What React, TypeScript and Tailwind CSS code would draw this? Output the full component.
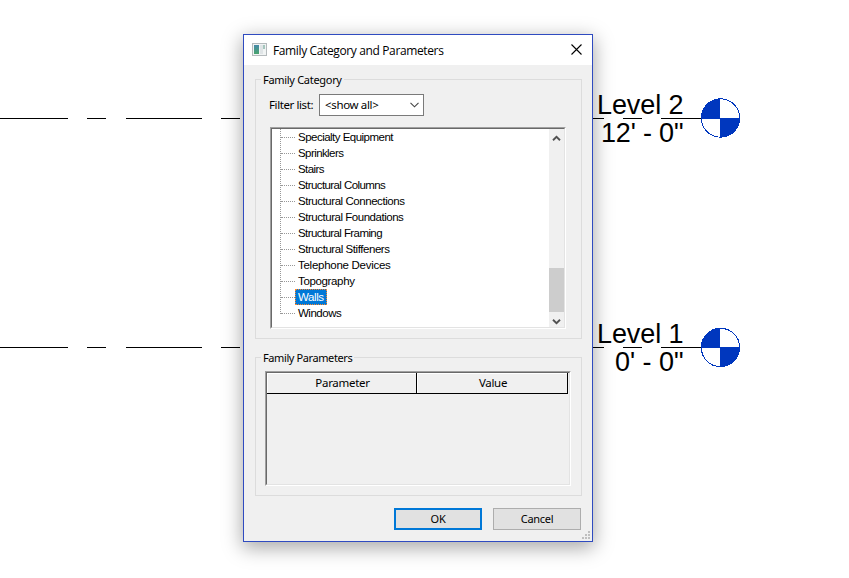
const categories = [
  { name: 'Specialty Equipment', spacing: 'tracking-[-0.52px]' },
  { name: 'Sprinklers', spacing: 'tracking-[-0.58px]' },
  { name: 'Stairs', spacing: 'tracking-[-0.6px]' },
  { name: 'Structural Columns', spacing: 'tracking-[-0.59px]' },
  { name: 'Structural Connections', spacing: 'tracking-[-0.45px]' },
  { name: 'Structural Foundations', spacing: 'tracking-[-0.47px]' },
  { name: 'Structural Framing', spacing: 'tracking-[-0.59px]' },
  { name: 'Structural Stiffeners', spacing: 'tracking-[-0.44px]' },
  { name: 'Telephone Devices', spacing: 'tracking-[-0.27px]' },
  { name: 'Topography', spacing: 'tracking-[-0.35px]' },
  { name: 'Walls', spacing: 'tracking-[-0.4px]' },
  { name: 'Windows', spacing: 'tracking-[-0.48px]' },
];

const dashes = [
  [0, 68],
  [87, 106],
  [126, 202],
  [221, 240],
  [593, 604],
  [623, 642],
  [661, 701],
];

function LevelMarker({ y, name, elevation, elevationX }: { y: number; name: string; elevation: string; elevationX: number }) {
  return (
    <g>
      {dashes.map(([a, b]) => (
        <rect key={a} x={a} y={y} width={b - a} height={1} fill="#000" shapeRendering="crispEdges" />
      ))}
      <text x={597} y={y - 4} textLength={86.5} fontSize={27} fontFamily="'Liberation Sans', Arial, sans-serif">
        {name}
      </text>
      <text x={elevationX} y={y + 24} textLength={683.5 - elevationX} fontSize={27} fontFamily="'Liberation Sans', Arial, sans-serif">
        {elevation}
      </text>
      <g transform={`translate(720.5 ${y + (y > 200 ? 0.5 : 0)})`} shapeRendering="crispEdges">
        <circle r={19.2} fill="#fff" stroke="#0037be" strokeWidth={1} />
        <path d="M-.5 .5H-19.5A19.5 19.5 0 0 1-.5-19.5ZM-.5 -.5H19.5A19.5 19.5 0 0 1-.5 19.5Z" fill="#0037be" />
      </g>
    </g>
  );
}

function ScrollArrow({ down = false }: { down?: boolean }) {
  return (
    <svg width="9" height="7" viewBox="0 0 9 7" className={down ? 'mt-1 rotate-180' : 'mt-0.5'}>
      <path d="M1 5.2 4.5 1.9 8 5.2" fill="none" stroke="#505050" strokeWidth="1.9" />
    </svg>
  );
}

function CategoryList() {
  return (
    <div className="ml-[14px] mt-[11px] h-[202px] w-[296px] border border-b-white border-l-[#a0a0a0] border-r-white border-t-[#a0a0a0]">
      <div className="flex h-full border border-b-[#e3e3e3] border-l-[#696969] border-r-[#e3e3e3] border-t-[#696969] bg-white">
        <div className="ml-2 h-[185px] border-l border-dotted border-[#989898]" />
        <ul className="flex-1">
          {categories.map((c) => (
            <li key={c.name} className="flex h-4">
              <div className="mt-2 h-px w-[14px] border-t border-dotted border-[#989898]" />
              <span
                className={
                  c.name === 'Walls'
                    ? "flex h-4 w-8 items-center bg-[#0078d7] pl-[3px] font-['Liberation_Sans',Arial,sans-serif] text-[11.5px] leading-4 text-white outline-1 -outline-offset-1 outline-dotted outline-[#ff8728] " + c.spacing
                    : "flex h-4 items-center whitespace-nowrap pl-[3px] font-['Liberation_Sans',Arial,sans-serif] text-[11.5px] leading-4 text-black " + c.spacing
                }
              >
                {c.name}
              </span>
            </li>
          ))}
        </ul>
        <div className="flex w-[15px] flex-col bg-[#f0f0f0]">
          <div className="flex h-[17px] items-center justify-center">
            <ScrollArrow />
          </div>
          <div className="mt-[122px] h-11 bg-[#cdcdcd]" />
          <div className="flex flex-1 items-center justify-center">
            <ScrollArrow down />
          </div>
        </div>
      </div>
    </div>
  );
}

function ParameterTable() {
  return (
    <div className="ml-[9px] mt-[5px] h-[115px] w-[306px] border border-b-white border-l-[#a0a0a0] border-r-white border-t-[#a0a0a0]">
      <div className="h-full border border-b-[#e3e3e3] border-l-[#696969] border-r-[#e3e3e3] border-t-[#696969]">
        <div className="flex h-[21px] w-[301px] border-b border-black text-center text-[11.5px] leading-[20px] tracking-[-0.3px]">
          <div className="w-[150px] border-r border-black pl-0.5 shadow-[inset_1px_1px_0_#fff]">Parameter</div>
          <div className="flex-1 border-r border-black pl-0.5 shadow-[inset_1px_1px_0_#fff]">Value</div>
        </div>
      </div>
    </div>
  );
}

function TitleBar() {
  return (
    <div className="flex h-[30px] items-center bg-white pl-2 pr-[10px]">
      <svg className="-mt-0.5" width="15" height="13" viewBox="0 0 15 13" shapeRendering="crispEdges">
        <defs>
          <linearGradient id="pane" x2="0" y2="1">
            <stop stopColor="#4689a8" />
            <stop offset="1" stopColor="#49a46d" />
          </linearGradient>
        </defs>
        <rect x=".5" y=".5" width="14" height="12" fill="#f1f4f4" stroke="#b4babc" />
        <rect x="2" y="2" width="5" height="9" fill="url(#pane)" />
        <rect x="8" y="2" width="3" height="9" fill="#dfe4e6" />
        <rect x="11" y="2" width="2" height="4" fill="#a5c6bd" />
      </svg>
      <h1 className="ml-1.5 flex-1 whitespace-nowrap pt-px font-['Open_Sans',sans-serif] text-[12px] tracking-[-0.37px]">Family Category and Parameters</h1>
      <svg className="-mt-0.5" width="11" height="11" viewBox="0 0 11 11">
        <path d="M.5 .5l10 10M10.5 .5l-10 10" stroke="#000" strokeWidth="1.1" />
      </svg>
    </div>
  );
}

function Dialog() {
  return (
    <section className="absolute left-[243px] top-[34px] flex h-[508px] w-[350px] flex-col border border-[#2f4bc0] bg-[#f0f0f0] font-['Noto_Sans',sans-serif] text-black shadow-[0_5px_18px_1px_rgba(0,0,0,0.34)]">
      <TitleBar />
      <fieldset className="ml-[11px] mt-[14px] h-[260px] w-[327px] border border-[#dcdcdc]">
        <div className="-mt-2 ml-[5px] h-[16px] w-fit whitespace-nowrap bg-[#f0f0f0] px-0.5 text-[11px] leading-[16px] tracking-[-0.3px]">Family Category</div>
        <div className="ml-[13px] mt-[6px] flex h-[22px] items-center">
          <label className="w-[50px] whitespace-nowrap text-[11.5px] tracking-[-0.4px]">Filter list:</label>
          <div className="flex h-[22px] w-[105px] items-center justify-between border border-[#7a7a7a] bg-white pl-[5px] pr-1 text-[11.5px] tracking-[-0.35px]">
            <span>&lt;show all&gt;</span>
            <svg width="9" height="6" viewBox="0 0 9 6">
              <path d="M.5 .8l4 4 4-4" fill="none" stroke="#444" strokeWidth="1.1" />
            </svg>
          </div>
        </div>
        <CategoryList />
      </fieldset>
      <fieldset className="ml-[11px] mt-[18px] h-[139px] w-[327px] border border-[#dcdcdc]">
        <div className="-mt-2 ml-[5px] h-[16px] w-fit whitespace-nowrap bg-[#f0f0f0] px-0.5 text-[11px] leading-[16px] tracking-[-0.4px]">Family Parameters</div>
        <ParameterTable />
      </fieldset>
      <div className="mt-3 flex gap-[11px] pl-[150px] text-[11px] tracking-[-0.3px]">
        <button className="h-[22px] w-[88px] border-2 border-[#0078d7] bg-[#e1e1e1] leading-[18px]">OK</button>
        <button className="h-[22px] w-[88px] border border-[#adadad] bg-[#e1e1e1] leading-5">Cancel</button>
      </div>
      <svg className="absolute bottom-0.5 right-0.5" width="8" height="8" viewBox="0 0 8 8" fill="#bfbfbf" shapeRendering="crispEdges">
        <path d="M6 0h2v2H6zM3 3h2v2H3zM6 3h2v2H6zM0 6h2v2H0zM3 6h2v2H3zM6 6h2v2H6z" />
      </svg>
    </section>
  );
}

export default function App() {
  return (
    <main className="relative h-[578px] w-[849px] overflow-hidden bg-white">
      <svg className="block" width="849" height="578" viewBox="0 0 849 578">
        <LevelMarker y={118} name="Level 2" elevation={'12\' - 0"'} elevationX={601} />
        <LevelMarker y={347} name="Level 1" elevation={'0\' - 0"'} elevationX={615} />
      </svg>
      <Dialog />
    </main>
  );
}
